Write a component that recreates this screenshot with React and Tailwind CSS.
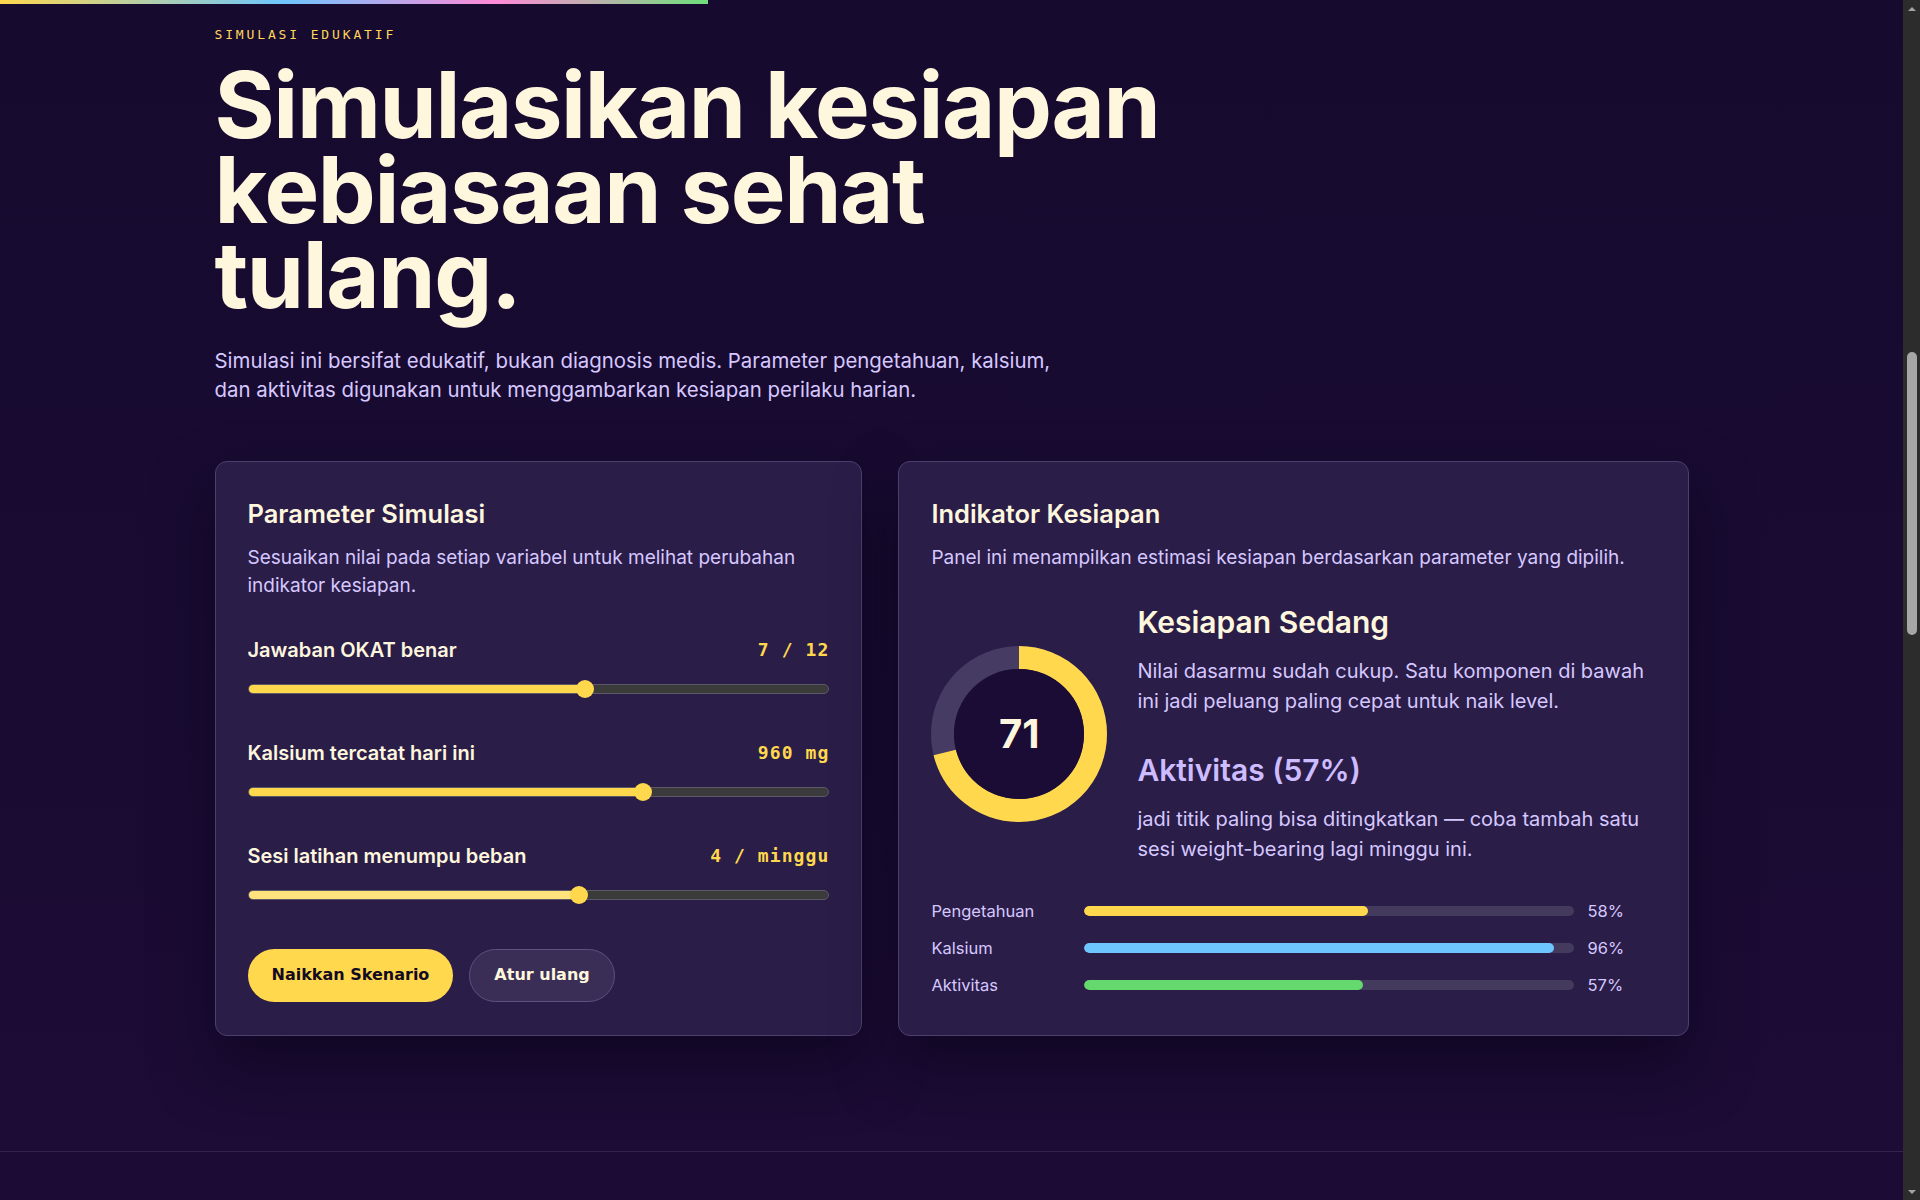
import React from "react"

const sliders = [
    { label: "Jawaban OKAT benar", value: "7 / 12", pct: 7 / 12, fill: "bg-[#ffd84d]" },
    { label: "Kalsium tercatat hari ini", value: "960 mg", pct: 960 / 1400, fill: "bg-[#ffd84d]" },
    { label: "Sesi latihan menumpu beban", value: "4 / minggu", pct: 4 / 7, fill: "bg-[#ffe27e]" },
]

const bars = [
    { label: "Pengetahuan", pct: 58, color: "bg-[#ffd84d]" },
    { label: "Kalsium", pct: 96, color: "bg-[#6ec6ff]" },
    { label: "Aktivitas", pct: 57, color: "bg-[#66d96e]" },
]

// track width minus thumb, so the thumb sits where a native range would put it
const Slider = ({ pct, fill }) => (
    <div className="relative h-[18px] mt-4">
        <div className="absolute left-0 right-0 top-1/2 -translate-y-1/2 h-[10px] rounded-full bg-[#3b3b3b] border border-[#5c5866] overflow-hidden">
            <div className={`h-full ${fill}`} style={{ width: `calc(9px + ${pct} * (100% - 18px))` }}></div>
        </div>
        <div
            className="absolute top-0 w-[18px] h-[18px] rounded-full bg-[#ffd84d]"
            style={{ left: `calc(${pct} * (100% - 18px))` }}
        ></div>
    </div>
)

const Donut = ({ value }) => {
    const r = 76.5
    const c = 2 * Math.PI * r
    return (
        <div className="relative w-[176px] h-[176px] shrink-0">
            <svg width="176" height="176" viewBox="0 0 176 176">
                <circle cx="88" cy="88" r={r} fill="none" stroke="#453b63" strokeWidth="23" />
                <circle
                    cx="88"
                    cy="88"
                    r={r}
                    fill="none"
                    stroke="#ffd84d"
                    strokeWidth="23"
                    strokeDasharray={`${(c * value) / 100} ${c}`}
                    transform="rotate(-90 88 88)"
                />
                <circle cx="88" cy="88" r="65" fill="#1b0c35" />
            </svg>
            <div className="absolute inset-0 flex items-center justify-center text-[40px] font-bold text-[#fff6de]">
                {value}
            </div>
        </div>
    )
}

// the page is shown mid-scroll, so draw the classic scrollbar strip
const Scrollbar = () => (
    <div className="w-[17px] shrink-0 bg-[#2c2c2c] flex flex-col items-center">
        <div className="h-[17px] flex items-center justify-center">
            <div className="w-0 h-0 border-l-[4px] border-r-[4px] border-b-[4px] border-l-transparent border-r-transparent border-b-[#a3a3a3]"></div>
        </div>
        <div className="mt-[335px] w-[10px] h-[283px] rounded-full bg-[#a6a6a6]"></div>
        <div className="mt-auto h-[17px] flex items-center justify-center">
            <div className="w-0 h-0 border-l-[4px] border-r-[4px] border-t-[4px] border-l-transparent border-r-transparent border-t-[#a3a3a3]"></div>
        </div>
    </div>
)

const App = () => {
    return (
        <div className="flex h-screen overflow-hidden bg-[#1a0c33] font-['Inter',sans-serif]">
            <div className="flex-1 overflow-hidden">
                {/* scroll progress */}
                <div className="fixed top-0 left-0 h-1 w-[708px] bg-[linear-gradient(90deg,#ffd84d,#6ec6ff_40%,#ff8ad8_70%,#6ee07a)] z-10"></div>

                <section className="bg-gradient-to-b from-[#160a2e] to-[#1c0c36] border-b border-[#33244f]">
                    <div className="max-w-[1474px] mx-auto pt-[25px] pb-[115px]">
                        <p className="font-['DejaVu_Sans_Mono',monospace] text-[13px] tracking-[0.22em] text-[#ffd65a]">
                            SIMULASI EDUKATIF
                        </p>
                        <h1 className="mt-[17px] max-w-[1000px] text-[92px] leading-[85px] font-bold tracking-[-0.015em] text-[#fff6de]">
                            Simulasikan kesiapan kebiasaan sehat tulang.
                        </h1>
                        <p className="mt-[29px] max-w-[850px] text-[20.4px] leading-[29px] text-[#d6c8ff]">
                            Simulasi ini bersifat edukatif, bukan diagnosis medis. Parameter pengetahuan, kalsium, dan
                            aktivitas digunakan untuk menggambarkan kesiapan perilaku harian.
                        </p>

                        <div className="mt-[57px] grid grid-cols-[0.82fr_1fr] gap-9">
                            {/* left card */}
                            <div className="rounded-xl border border-[#4b3f6d] bg-[#2a1d48] px-8 pt-[36px] pb-[33px] shadow-[0_30px_60px_rgba(8,2,20,0.5)]">
                                <h2 className="text-[25.5px] leading-8 font-semibold text-[#fff6de]">Parameter Simulasi</h2>
                                <p className="mt-[14px] text-[19px] leading-7 text-[#d6c8ff]">
                                    Sesuaikan nilai pada setiap variabel untuk melihat perubahan indikator kesiapan.
                                </p>
                                <div className="mt-9 space-y-[41px]">
                                    {sliders.map((s) => (
                                        <div key={s.label}>
                                            <div className="flex items-center justify-between h-7">
                                                <span className="text-[20px] font-semibold text-[#fff6de]">{s.label}</span>
                                                <span className="font-['DejaVu_Sans_Mono',monospace] text-[18px] font-bold tracking-[0.06em] text-[#ffd84d]">
                                                    {s.value}
                                                </span>
                                            </div>
                                            <Slider pct={s.pct} fill={s.fill} />
                                        </div>
                                    ))}
                                </div>
                                <div className="mt-[45px] flex gap-4">
                                    <button className="h-[53px] px-6 rounded-full bg-[#ffd84d] text-[#140a24] font-['DejaVu_Sans',sans-serif] font-bold text-[16px]">
                                        Naikkan Skenario
                                    </button>
                                    <button className="h-[53px] px-6 rounded-full bg-[#3a2e57] border border-[#5d5280] text-[#fff6de] font-['DejaVu_Sans',sans-serif] font-bold text-[16px]">
                                        Atur ulang
                                    </button>
                                </div>
                            </div>

                            {/* right card */}
                            <div className="rounded-xl border border-[#4b3f6d] bg-[#2a1d48] px-8 pt-[36px] pb-8 shadow-[0_30px_60px_rgba(8,2,20,0.5)]">
                                <h2 className="text-[25.5px] leading-8 font-semibold text-[#fff6de]">Indikator Kesiapan</h2>
                                <p className="mt-[14px] text-[19px] leading-7 text-[#d6c8ff]">
                                    Panel ini menampilkan estimasi kesiapan berdasarkan parameter yang dipilih.
                                </p>
                                <div className="mt-8 flex items-center gap-[30px]">
                                    <Donut value={71} />
                                    <div>
                                        <h3 className="text-[30px] leading-9 font-semibold text-[#fff6de]">Kesiapan Sedang</h3>
                                        <p className="mt-4 text-[20px] leading-[30px] text-[#d6c8ff]">
                                            Nilai dasarmu sudah cukup. Satu komponen di bawah ini jadi peluang paling cepat untuk
                                            naik level.
                                        </p>
                                        <h3 className="mt-[36px] text-[30px] leading-9 font-semibold text-[#cdbcff]">Aktivitas (57%)</h3>
                                        <p className="mt-4 text-[20px] leading-[30px] text-[#d6c8ff]">
                                            jadi titik paling bisa ditingkatkan — coba tambah satu sesi weight-bearing lagi minggu
                                            ini.
                                        </p>
                                    </div>
                                </div>
                                <div className="mt-[35px] space-y-4">
                                    {bars.map((b) => (
                                        <div key={b.label} className="grid grid-cols-[141px_1fr_70px] gap-3 items-center h-[21px]">
                                            <span className="text-[16.5px] text-[#d6c8ff]">{b.label}</span>
                                            <div className="h-[10px] rounded-full bg-[#433a5e] overflow-hidden">
                                                <div className={`h-full rounded-full ${b.color}`} style={{ width: `${b.pct}%` }}></div>
                                            </div>
                                            <span className="pl-[2px] text-[16.5px] text-[#d6c8ff]">{b.pct}%</span>
                                        </div>
                                    ))}
                                </div>
                            </div>
                        </div>
                    </div>
                </section>

                <div className="h-[800px] bg-[#1c0c35]"></div>
            </div>
            <Scrollbar />
        </div>
    )
}

export default App
